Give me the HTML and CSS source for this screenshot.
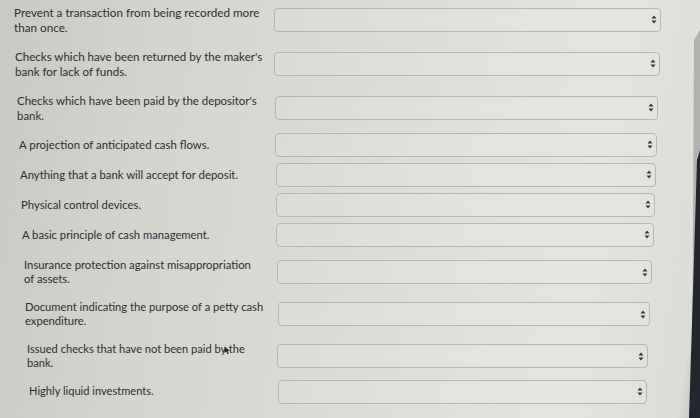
FILE: index.html
```html
<!DOCTYPE html>
<html lang="en">
<head>
<meta charset="utf-8">
<title>Matching</title>
<link rel="stylesheet" href="styles.css">
</head>
<body>
<main class="quiz">
  <div class="row">
    <div class="label">Prevent a transaction from being recorded more than once.</div>
    <div class="select"><svg class="updown" viewBox="0 0 6 9" width="6" height="9"><path d="M3 0.5 L5.5 3.5 H0.5 Z M3 8.5 L5.5 5.5 H0.5 Z"/></svg></div>
  </div>
  <div class="row">
    <div class="label">Checks which have been returned by the maker's bank for lack of funds.</div>
    <div class="select"><svg class="updown" viewBox="0 0 6 9" width="6" height="9"><path d="M3 0.5 L5.5 3.5 H0.5 Z M3 8.5 L5.5 5.5 H0.5 Z"/></svg></div>
  </div>
  <div class="row">
    <div class="label">Checks which have been paid by the depositor's bank.</div>
    <div class="select"><svg class="updown" viewBox="0 0 6 9" width="6" height="9"><path d="M3 0.5 L5.5 3.5 H0.5 Z M3 8.5 L5.5 5.5 H0.5 Z"/></svg></div>
  </div>
  <div class="row">
    <div class="label">A projection of anticipated cash flows.</div>
    <div class="select"><svg class="updown" viewBox="0 0 6 9" width="6" height="9"><path d="M3 0.5 L5.5 3.5 H0.5 Z M3 8.5 L5.5 5.5 H0.5 Z"/></svg></div>
  </div>
  <div class="row">
    <div class="label">Anything that a bank will accept for deposit.</div>
    <div class="select"><svg class="updown" viewBox="0 0 6 9" width="6" height="9"><path d="M3 0.5 L5.5 3.5 H0.5 Z M3 8.5 L5.5 5.5 H0.5 Z"/></svg></div>
  </div>
  <div class="row">
    <div class="label">Physical control devices.</div>
    <div class="select"><svg class="updown" viewBox="0 0 6 9" width="6" height="9"><path d="M3 0.5 L5.5 3.5 H0.5 Z M3 8.5 L5.5 5.5 H0.5 Z"/></svg></div>
  </div>
  <div class="row">
    <div class="label">A basic principle of cash management.</div>
    <div class="select"><svg class="updown" viewBox="0 0 6 9" width="6" height="9"><path d="M3 0.5 L5.5 3.5 H0.5 Z M3 8.5 L5.5 5.5 H0.5 Z"/></svg></div>
  </div>
  <div class="row">
    <div class="label">Insurance protection against misappropriation of assets.</div>
    <div class="select"><svg class="updown" viewBox="0 0 6 9" width="6" height="9"><path d="M3 0.5 L5.5 3.5 H0.5 Z M3 8.5 L5.5 5.5 H0.5 Z"/></svg></div>
  </div>
  <div class="row">
    <div class="label">Document indicating the purpose of a petty cash expenditure.</div>
    <div class="select"><svg class="updown" viewBox="0 0 6 9" width="6" height="9"><path d="M3 0.5 L5.5 3.5 H0.5 Z M3 8.5 L5.5 5.5 H0.5 Z"/></svg></div>
  </div>
  <div class="row">
    <div class="label cursor-host">Issued checks that have not been paid by the bank.<svg class="cursor" viewBox="0 0 8 11" width="7" height="9"><path d="M0.5 0.5 L0.5 8.5 L2.6 6.6 L4.2 10.2 L5.6 9.6 L4.1 6.1 L7 6 Z"/></svg></div>
    <div class="select"><svg class="updown" viewBox="0 0 6 9" width="6" height="9"><path d="M3 0.5 L5.5 3.5 H0.5 Z M3 8.5 L5.5 5.5 H0.5 Z"/></svg></div>
  </div>
  <div class="row">
    <div class="label">Highly liquid investments.</div>
    <div class="select"><svg class="updown" viewBox="0 0 6 9" width="6" height="9"><path d="M3 0.5 L5.5 3.5 H0.5 Z M3 8.5 L5.5 5.5 H0.5 Z"/></svg></div>
  </div>
</main>
</body>
</html>
```

FILE: styles.css
```css
html, body {
  margin: 0;
  height: 100%;
}

body {
  position: relative;
  overflow: hidden;
  font-family: Lato, "Liberation Sans", sans-serif;
  color: #2c2c31;
  background: linear-gradient(98deg, #c9c9c4 0%, #d4d4ce 22%, #dcdcd6 50%, #e5e5df 82%, #dddcd6 97%, #b9b9b5 100%);
}

body::before {
  content: "";
  position: absolute;
  inset: 0;
  background: linear-gradient(90deg, rgba(150, 150, 150, 0) 0%, rgba(140, 140, 140, 0.55) 100%);
  clip-path: polygon(700px 30px, 694px 40px, 692px 418px, 700px 418px);
  pointer-events: none;
}

body::after {
  content: "";
  position: absolute;
  inset: 0;
  background: #23262e;
  clip-path: polygon(700px 150px, 697px 160px, 693px 290px, 689px 418px, 700px 418px);
  pointer-events: none;
}

.quiz {
  display: flex;
  flex-direction: column;
  gap: 5px;
}

.row {
  display: flex;
  align-items: center;
}

.label {
  flex: none;
  box-sizing: border-box;
  padding: 4.5px 4px 4.5px 0;
  font-size: 11.7px;
  line-height: 15px;
}

.select {
  flex: 1;
  height: 24px;
  box-sizing: border-box;
  border: 1px solid #b7b7b1;
  border-radius: 4px;
  background: rgba(255, 255, 255, 0.1);
  display: flex;
  align-items: center;
  justify-content: flex-end;
  padding-right: 3px;
}

.updown {
  fill: #35353a;
}

.cursor-host {
  position: relative;
}

.cursor {
  position: absolute;
  left: 197px;
  top: 8px;
  fill: #26262b;
}

/* photographed screen: rows drift right, shrink and narrow toward the bottom */
.row:nth-child(1)  { padding: 0 39px 0 14px; }
.row:nth-child(1)  .label { width: 260px; padding-right: 10px; }
.row:nth-child(2)  { padding: 0 40px 0 15px; }
.row:nth-child(2)  .label { width: 259px; font-size: 11.55px; }
.row:nth-child(3)  { padding: 0 42px 0 17px; }
.row:nth-child(3)  .label { width: 258px; font-size: 11.45px; }
.row:nth-child(4)  { padding: 0 43px 0 19px; }
.row:nth-child(4)  .label { width: 256px; font-size: 11.4px; padding-block: 5px; }
.row:nth-child(5)  { padding: 0 44px 0 20px; }
.row:nth-child(5)  .label { width: 256px; font-size: 11.35px; padding-block: 5px; }
.row:nth-child(6)  { padding: 0 45px 0 21px; }
.row:nth-child(6)  .label { width: 255px; font-size: 11.3px; padding-block: 5px; }
.row:nth-child(7)  { padding: 0 46px 0 22px; }
.row:nth-child(7)  .label { width: 254px; font-size: 11.25px; padding-block: 5px; }
.row:nth-child(8)  { padding: 0 48px 0 24px; margin-top: 1.5px; }
.row:nth-child(8)  .label { width: 253px; padding-right: 20px; font-size: 11.3px; line-height: 14.5px; padding-block: 4px; }
.row:nth-child(9)  { padding: 0 50px 0 25px; }
.row:nth-child(9)  .label { width: 253px; padding-right: 0; font-size: 11.2px; line-height: 14.5px; padding-block: 4px; }
.row:nth-child(10) { padding: 0 52px 0 27px; }
.row:nth-child(10) .label { width: 250px; font-size: 11.1px; line-height: 14.5px; padding-block: 4px; }
.row:nth-child(11) { padding: 0 53px 0 29px; }
.row:nth-child(11) .label { width: 249px; font-size: 11.1px; line-height: 14.5px; padding-block: 4px; }
```
